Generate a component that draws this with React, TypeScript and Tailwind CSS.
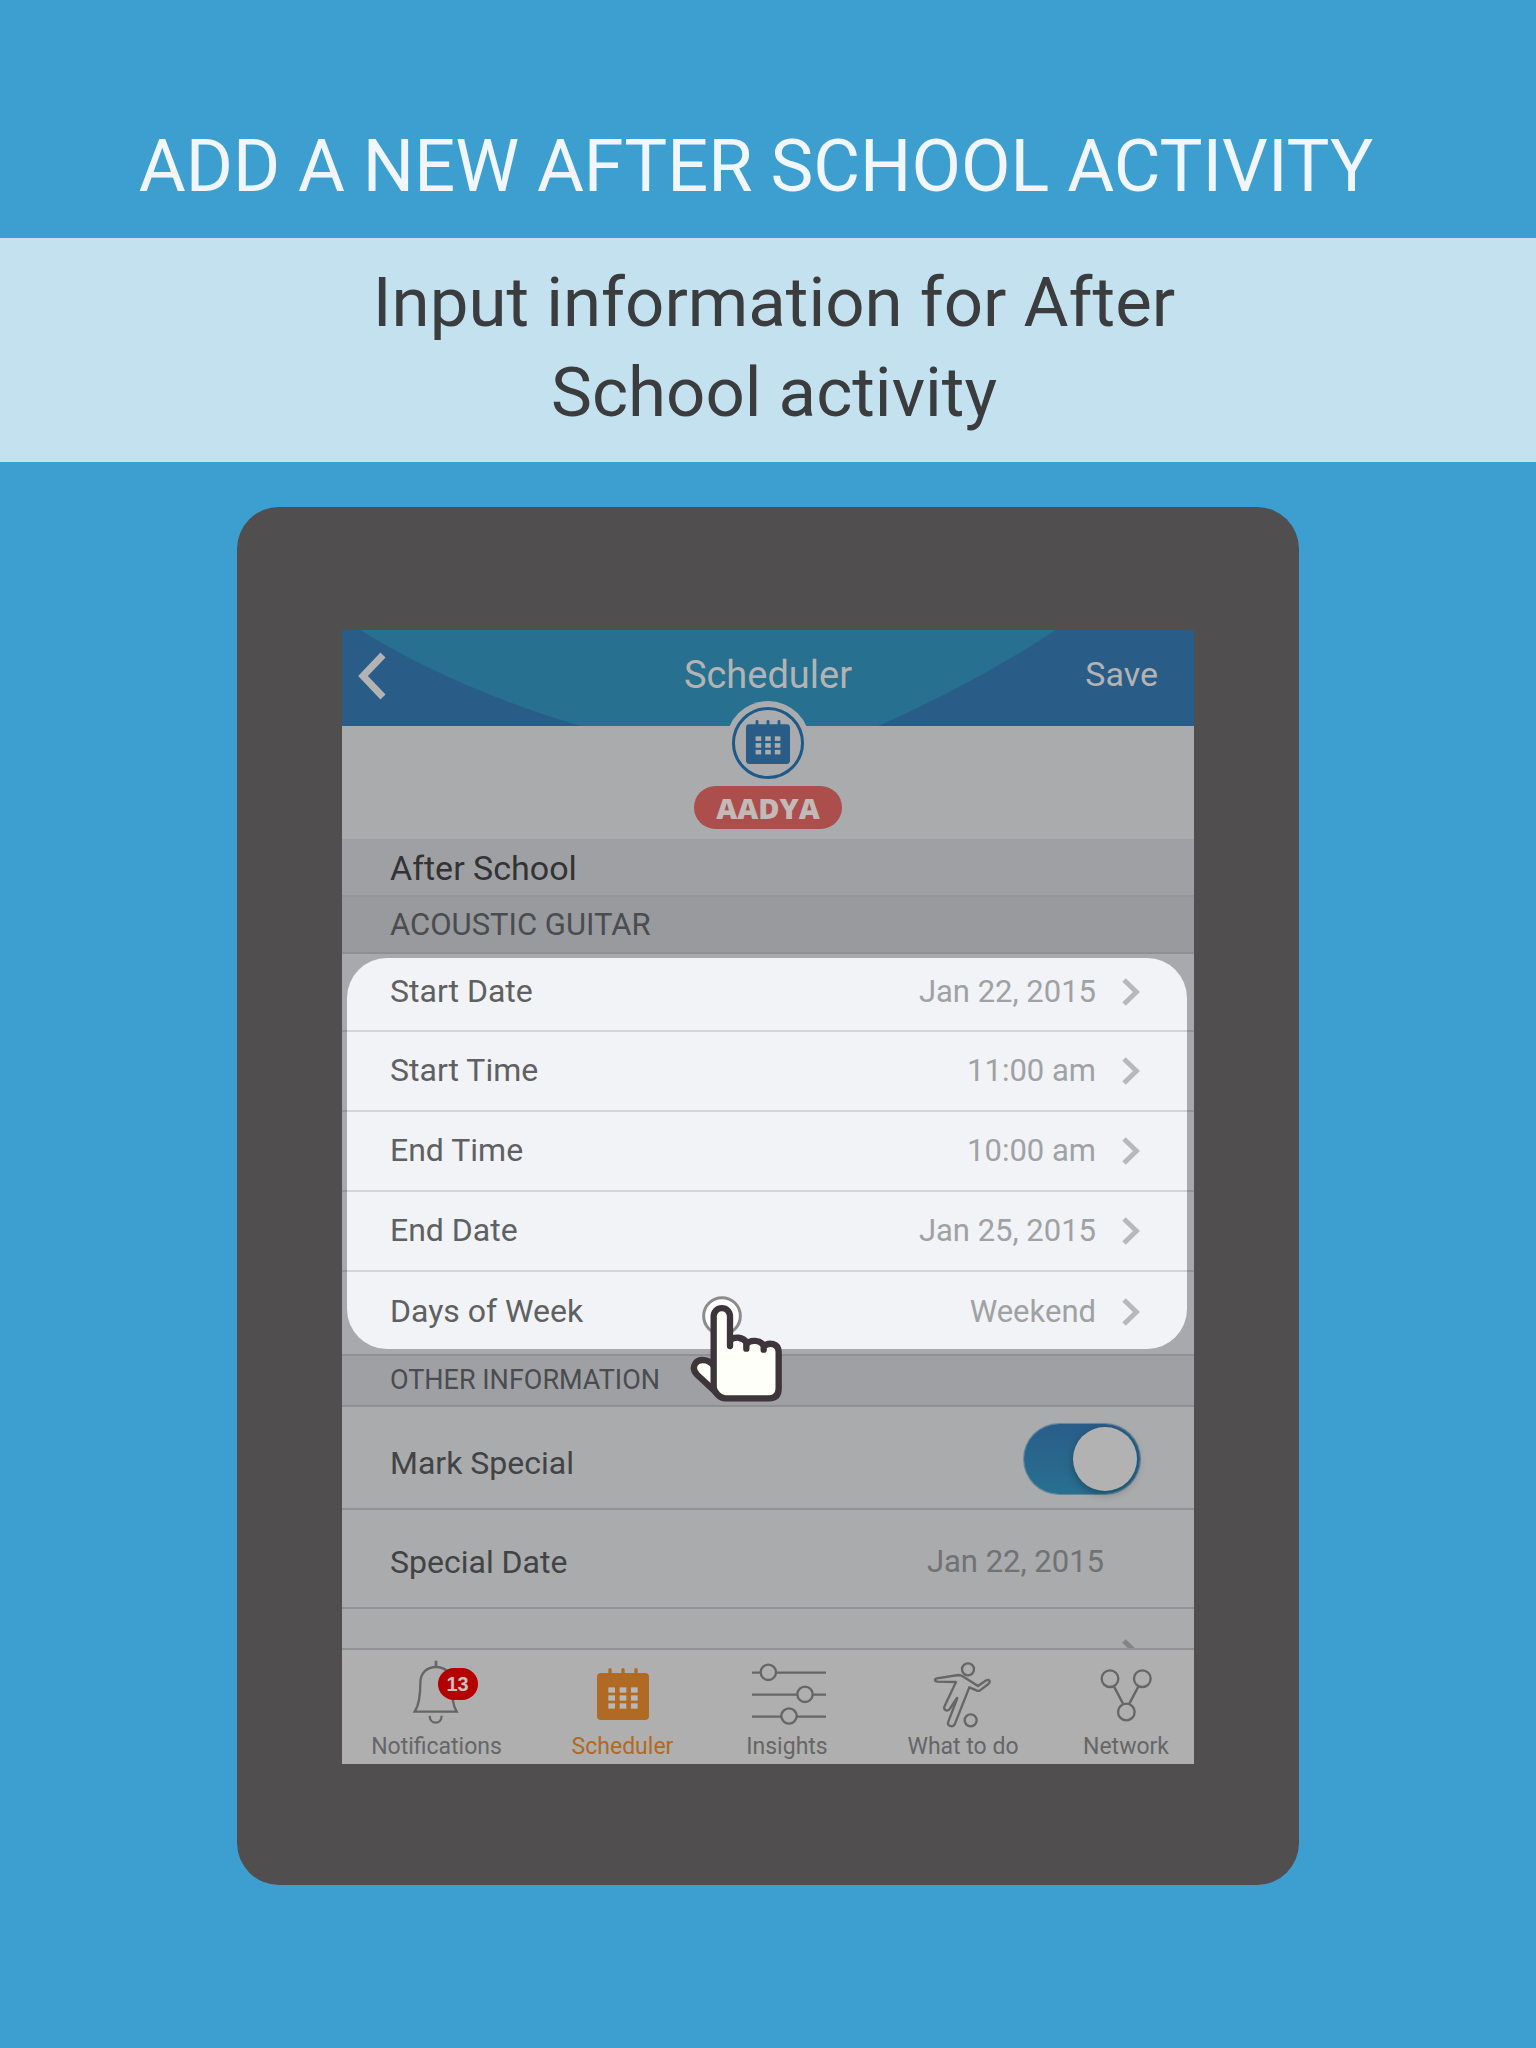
import React from "react";

type Detail = { label: string; value: string };

const details: Detail[] = [
  { label: "Start Date", value: "Jan 22, 2015" },
  { label: "Start Time", value: "11:00 am" },
  { label: "End Time", value: "10:00 am" },
  { label: "End Date", value: "Jan 25, 2015" },
  { label: "Days of Week", value: "Weekend" },
];

function Chevron({ className }: { className: string }) {
  return (
    <svg viewBox="0 0 18 28" className={`h-7 w-[18px] shrink-0 ${className}`} fill="none" stroke="currentColor" strokeWidth="5" aria-hidden="true">
      <path d="M2 2 L14.5 14 L2 26" />
    </svg>
  );
}

function CalendarGlyph({ className, hole }: { className: string; hole: string }) {
  return (
    <svg viewBox="0 0 156 156" className={className} fill="currentColor" aria-hidden="true">
      <rect x="0" y="15" width="156" height="141" rx="12" />
      {[34, 73, 112].map((x) => (
        <rect key={x} x={x} y="0" width="10" height="30" rx="5" />
      ))}
      {[58, 82, 106].map((y) =>
        [34, 68, 102].map((x) => <rect key={`${x}-${y}`} x={x} y={y} width="20" height="16" fill={hole} />),
      )}
    </svg>
  );
}

function BellIcon() {
  return (
    <svg viewBox="230 78 180 216" className="h-[72px] w-[60px]" fill="none" stroke="currentColor" strokeWidth="7" aria-hidden="true">
      <path d="M317 92 V110" strokeWidth="8" />
      <path d="M253 245 C267 225 270 195 270 160 C270 128 290 111 317 111 C344 111 364 128 364 160 C364 195 366 225 379 245 Z" />
      <path d="M298 257 C298 285 334 285 334 257" />
    </svg>
  );
}

function SlidersIcon() {
  return (
    <svg viewBox="90 78 234 216" className="ml-1 h-[72px] w-[78px]" fill="none" stroke="currentColor" strokeWidth="7" aria-hidden="true">
      <path d="M96 128 H121 M169 128 H318 M96 194 H231 M279 194 H318 M96 260 H183 M231 260 H318" />
      <circle cx="145" cy="127" r="23" />
      <circle cx="255" cy="193" r="23" />
      <circle cx="207" cy="258" r="23" />
    </svg>
  );
}

function PlayerIcon() {
  return (
    <svg viewBox="636 78 186 216" className="h-[72px] w-[62px]" fill="none" stroke="currentColor" strokeWidth="7" strokeLinejoin="round" aria-hidden="true">
      <circle cx="744" cy="118" r="18" />
      <circle cx="752" cy="271" r="18" />
      <path d="M651 145 L715 135 Q722 135 728 139 L774 168 L799 151 Q807 147 809 154 Q810 158 805 162 L780 181 Q776 184 771 182 L748 172 L705 281 Q700 291 690 288 Q681 284 685 275 L711 207 Q713 201 709 206 L690 236 Q684 244 676 240 Q670 236 674 228 L708 156 L652 155 Q645 154 645 150 Q645 146 651 145 Z" />
    </svg>
  );
}

function NetworkIcon() {
  return (
    <svg viewBox="1128 78 180 216" className="h-[72px] w-[60px]" fill="none" stroke="currentColor" strokeWidth="7" aria-hidden="true">
      <circle cx="1170" cy="146" r="25" />
      <circle cx="1267" cy="146" r="25" />
      <circle cx="1219" cy="246" r="25" />
      <path d="M1182 170 L1209 221 M1255 170 L1228 221" />
    </svg>
  );
}

function TapHand() {
  return (
    <svg viewBox="147 70 285 330" className="pointer-events-none absolute -bottom-[50px] left-1/2 z-10 -ml-[79px] h-[110px] w-[95px]" fill="none" strokeLinecap="round" strokeLinejoin="round" aria-hidden="true">
      <circle cx="246" cy="136" r="55" fill="#ffffff" stroke="#8d8a8a" strokeWidth="9" />
      <g stroke="#3d3539" strokeWidth="19" fill="#fffffa">
        <path d="M221 284 C204 264 175 263 165 280 C158 292 163 304 172 313 L238 374 Z" />
        <path d="M221 350 V137 A24 24 0 0 1 270 137 V226 V210 C282 196 310 199 319 215 V234 V221 C330 206 362 207 371 226 V237 V228 C386 213 416 217 416 245 V353 Q416 383 388 383 H256 Q243 383 232 371 Q221 360 221 350 Z" />
      </g>
    </svg>
  );
}

function Tab({ label, active, children }: { label: string; active?: boolean; children: React.ReactNode }) {
  return (
    <a href="#" className={`flex flex-col items-center ${active ? "text-[#b06a24]" : "text-[#666667]"}`}>
      <span className="relative flex h-[72px] items-end justify-center">{children}</span>
      <span className="mt-[5px] text-[23px] leading-7">{label}</span>
    </a>
  );
}

export default function App() {
  return (
    <div className="min-h-screen bg-[#3d9fd0] pb-[162px] font-['Roboto',sans-serif]">
      <h1 className="pt-[123px] pb-[27px] pr-6 text-center text-[72px] leading-[88px] text-[#f1f5fc]">ADD A NEW AFTER SCHOOL ACTIVITY</h1>
      <div className="bg-[#c4e1ef] pt-5 pb-6 pl-3">
        <p className="mx-auto max-w-[860px] text-center text-[69px] leading-[90px] text-[#3a3c3e]">
          Input information for After School activity
        </p>
      </div>

      <main className="mx-auto mt-[45px] max-w-[1062px] rounded-[42px] bg-[#504e4f] px-[105px] pt-[123px] pb-[121px]">
        <div className="bg-[#aaabad]">
          <header className="relative flex h-24 items-center justify-between bg-[#295d88] px-4 text-[#b3b3b4]">
            <svg viewBox="0 0 852 96" preserveAspectRatio="none" className="absolute inset-0 h-full w-full" aria-hidden="true">
              <path d="M18 0 Q112 58 238 96 H536 Q628 56 714 0 Z" fill="#28708f" />
            </svg>
            <div className="relative flex flex-1 pb-1">
              <button type="button" aria-label="Back">
                <svg viewBox="0 0 28 48" className="h-12 w-7" fill="none" stroke="currentColor" strokeWidth="7" aria-hidden="true">
                  <path d="M25 3 L5 24 L25 45" />
                </svg>
              </button>
            </div>
            <h2 className="relative pb-1.5 text-[38px] leading-[44px]">Scheduler</h2>
            <div className="relative flex flex-1 justify-end pb-2">
              <button type="button" className="mr-5 text-[34px] leading-[44px]">Save</button>
            </div>
            <div className="absolute top-[71px] left-1/2 z-10 flex size-[84px] -translate-x-1/2 items-center justify-center rounded-full bg-[#aaabad]">
              <div className="flex size-[72px] items-center justify-center rounded-full border-[3px] border-[#1d5a89]">
                <CalendarGlyph className="mb-0.5 size-11 text-[#295d88]" hole="#aaabad" />
              </div>
            </div>
          </header>

          <div className="flex h-[113px] items-end justify-center pb-2.5">
            <span className="rounded-full bg-[#ab4e4c] px-[22px] text-[29px] leading-[43px] font-extrabold text-[#c4b9b9] font-['Open_Sans',sans-serif]">AADYA</span>
          </div>

          <h3 className="border-b-2 border-[#949599] bg-[#9fa0a4] pt-0.5 pl-12 text-[34px] leading-[54px] text-[#333334]">After School</h3>
          <h4 className="border-b-2 border-[#8f9094] bg-[#999a9e] pl-12 text-[31px] leading-[55px] text-[#4a4c4f]">ACOUSTIC GUITAR</h4>

          <div className="relative">
            <div className="relative overflow-hidden bg-[#f1f3f7] pb-0.5">
              <ul>
                {details.map((d) => (
                  <li key={d.label} className="h-20 border-b-2 border-[#d3d4d8] first:h-[78px] last:border-b-0">
                    <button type="button" className="flex h-full w-full items-center pr-[54px] pl-12 leading-10">
                      <span className="flex-1 pb-0.5 text-left text-[32px] text-[#5f6062]">{d.label}</span>
                      <span className="mr-[26px] text-[31px] text-[#a0a1a3]">{d.value}</span>
                      <Chevron className="text-[#b7b8bd]" />
                    </button>
                  </li>
                ))}
              </ul>
              <div className="pointer-events-none absolute top-1 right-[7px] bottom-[5px] left-[5px] rounded-[40px] shadow-[0_0_0_60px_rgba(0,0,0,0.3)]" />
            </div>
            <TapHand />
          </div>

          <h4 className="border-y-2 border-[#8f9094] bg-[#9fa0a4] pl-12 text-[27px] leading-[49px] text-[#4a4c4f]">OTHER INFORMATION</h4>
          <div className="flex h-[103px] items-center justify-between border-b-2 border-[#929396] pt-0.5 pr-[54px] pl-12">
            <label htmlFor="special" className="pt-2 text-[32px] leading-10 text-[#424345]">Mark Special</label>
            <input
              id="special"
              type="checkbox"
              role="switch"
              defaultChecked
              className="flex h-[70px] w-[116px] appearance-none items-center justify-start rounded-full bg-linear-to-b from-[#295d8a] to-[#28708f] px-[3px] ring-1 ring-[#23648c]/50 before:size-16 before:rounded-full before:bg-[#b2b2b2] before:shadow-[0_3px_8px_rgba(0,0,0,0.3)] checked:justify-end"
            />
          </div>
          <div className="flex h-[99px] items-center justify-between border-b-2 border-[#929396] pr-[90px] pl-12 leading-10">
            <span className="pt-1.5 text-[32px] text-[#424345]">Special Date</span>
            <span className="pt-1.5 text-[31px] text-[#717274]">Jan 22, 2015</span>
          </div>
          <div className="flex h-[39px] justify-end overflow-hidden pt-[30px] pr-[54px]">
            <Chevron className="text-[#838486]" />
          </div>

          <nav className="grid h-[116px] grid-cols-[189fr_183fr_146fr_206fr_120fr] border-t-2 border-[#919296] bg-[#afafaf] pt-1.5 pr-2">
            <Tab label="Notifications">
              <BellIcon />
              <span className="absolute top-3 left-[31px] h-8 w-10 rounded-full bg-[#b40000] text-center text-[20px] leading-8 font-bold text-[#c9c0c0] font-['Liberation_Sans',sans-serif]">13</span>
            </Tab>
            <Tab label="Scheduler" active>
              <CalendarGlyph className="mb-2 size-[52px]" hole="#b8b8b8" />
            </Tab>
            <Tab label="Insights">
              <SlidersIcon />
            </Tab>
            <Tab label="What to do">
              <PlayerIcon />
            </Tab>
            <Tab label="Network">
              <NetworkIcon />
            </Tab>
          </nav>
        </div>
      </main>
    </div>
  );
}
